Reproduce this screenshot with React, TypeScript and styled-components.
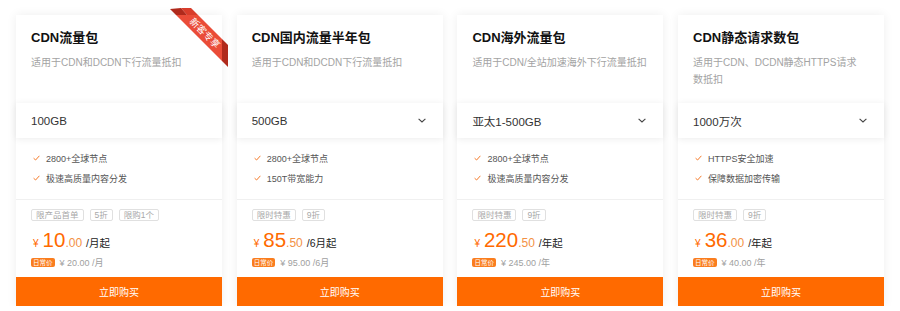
import React from "react";
import styled, { createGlobalStyle } from "styled-components";

const Global = createGlobalStyle`
  html, body { margin: 0; padding: 0; background: #ffffff; }
  body { font-family: "Liberation Sans", "Noto Sans CJK SC", sans-serif; }
`;

const Page = styled.div`
  display: flex;
  gap: 14.7px;
  padding: 15px 0 0 16px;
`;

const Card = styled.div`
  position: relative;
  width: 206px;
  display: flex;
  flex-direction: column;
  background: #fff;
  box-shadow: 0 0 10px rgba(0, 0, 0, 0.07);
`;

const Header = styled.div`
  height: 88px;
  box-sizing: border-box;
  padding: 13px 15px 0;
`;

const Title = styled.div`
  font-size: 13px;
  font-weight: bold;
  line-height: 19px;
  color: #111;
`;

const Desc = styled.div`
  margin-top: 7px;
  font-size: 10px;
  line-height: 17px;
  color: #a3a3a3;
  white-space: pre-line;
`;

const Select = styled.div`
  height: 35px;
  box-sizing: border-box;
  padding: 0 17px 0 15px;
  display: flex;
  align-items: center;
  justify-content: space-between;
  font-size: 11.5px;
  color: #333;
  background: #fff;
  box-shadow: 0 1px 7px rgba(0, 0, 0, 0.08);
`;

const Features = styled.ul`
  list-style: none;
  margin: 0;
  padding: 10px 15px 11px 17px;
  border-bottom: 1px solid #f0f0f0;
`;

const Feature = styled.li`
  display: flex;
  align-items: center;
  gap: 6px;
  height: 20px;
  font-size: 9px;
  color: #555;
`;

const Bottom = styled.div`
  padding: 9px 15px 0;
  display: flex;
  flex-direction: column;
`;

const Tags = styled.div`
  display: flex;
  gap: 6px;
`;

const Tag = styled.span`
  height: 12px;
  box-sizing: border-box;
  padding: 0 4px;
  border: 1px solid #e0e0e0;
  border-radius: 2px;
  font-size: 8.5px;
  line-height: 10px;
  color: #a8a8a8;
`;

const PriceLine = styled.div`
  margin-top: 7px;
  height: 24px;
  display: flex;
  align-items: baseline;
  color: #ff6a00;
  line-height: 24px;
`;

const Yen = styled.span`
  font-size: 10px;
  margin: 0 4px 0 2px;
`;

const Big = styled.span`
  font-size: 20.5px;
`;

const Decimal = styled.span`
  font-size: 12px;
  color: #f39145;
`;

const Unit = styled.span`
  font-size: 10.5px;
  color: #222;
  margin-left: 4px;
`;

const Daily = styled.div`
  margin-top: 5px;
  height: 10px;
  display: flex;
  align-items: center;
  gap: 5px;
  font-size: 9px;
  color: #a0a0a0;
`;

const Badge = styled.span`
  height: 9px;
  padding: 0 2px;
  border-radius: 2px;
  background: #fa7d1e;
  color: #fff;
  font-size: 6.5px;
  line-height: 9px;
`;

const BuyButton = styled.button`
  margin-top: 10px;
  height: 29px;
  border: none;
  background: #ff6a00;
  color: #fff;
  font-family: inherit;
  font-size: 10px;
  cursor: pointer;
`;

const Ribbon = styled.svg`
  position: absolute;
  top: -8px;
  right: -8px;
  width: 60px;
  height: 62px;
`;

const Check = () => (
  <svg width="7" height="6" viewBox="0 0 7 6">
    <path d="M0.6 3.2 L2.6 5 L6.4 0.8" fill="none" stroke="#f57a2a" strokeWidth="1" />
  </svg>
);

const Chevron = () => (
  <svg width="8" height="5" viewBox="0 0 8 5">
    <path d="M0.6 0.8 L4 4 L7.4 0.8" fill="none" stroke="#444" strokeWidth="1.1" />
  </svg>
);

type Plan = {
  title: string;
  desc: string;
  spec: string;
  dropdown: boolean;
  features: string[];
  tags: string[];
  big: string;
  dec: string;
  unit: string;
  daily: string;
  ribbon?: boolean;
};

const plans: Plan[] = [
  {
    title: "CDN流量包",
    desc: "适用于CDN和DCDN下行流量抵扣",
    spec: "100GB",
    dropdown: false,
    features: ["2800+全球节点", "极速高质量内容分发"],
    tags: ["限产品首单", "5折", "限购1个"],
    big: "10",
    dec: ".00",
    unit: "/月起",
    daily: "¥ 20.00 /月",
    ribbon: true,
  },
  {
    title: "CDN国内流量半年包",
    desc: "适用于CDN和DCDN下行流量抵扣",
    spec: "500GB",
    dropdown: true,
    features: ["2800+全球节点", "150T带宽能力"],
    tags: ["限时特惠", "9折"],
    big: "85",
    dec: ".50",
    unit: "/6月起",
    daily: "¥ 95.00 /6月",
  },
  {
    title: "CDN海外流量包",
    desc: "适用于CDN/全站加速海外下行流量抵扣",
    spec: "亚太1-500GB",
    dropdown: true,
    features: ["2800+全球节点", "极速高质量内容分发"],
    tags: ["限时特惠", "9折"],
    big: "220",
    dec: ".50",
    unit: "/年起",
    daily: "¥ 245.00 /年",
  },
  {
    title: "CDN静态请求数包",
    desc: "适用于CDN、DCDN静态HTTPS请求\n数抵扣",
    spec: "1000万次",
    dropdown: true,
    features: ["HTTPS安全加速", "保障数据加密传输"],
    tags: ["限时特惠", "9折"],
    big: "36",
    dec: ".00",
    unit: "/年起",
    daily: "¥ 40.00 /年",
  },
];

const NewRibbon = () => (
  <Ribbon viewBox="0 0 60 62">
    <polygon points="6,8 28,8 52,32 52,54" fill="#ea4c38" />
    <polygon points="11,1 21,1 28,8 17,8" fill="#d83d2b" />
    <polygon points="0,2 0,2 11,1 17,8 6,8" fill="#b02a1c" />
    <polygon points="52,32 58,38 58,60 52,54" fill="#b02a1c" />
    <text
      x="0"
      y="0"
      transform="translate(35 26) rotate(45)"
      textAnchor="middle"
      dominantBaseline="central"
      fontSize="9.5"
      fill="#fff"
      fontFamily="'Liberation Sans', 'Noto Sans CJK SC', sans-serif"
    >
      新客专享
    </text>
  </Ribbon>
);

export default function App() {
  return (
    <>
      <Global />
      <Page>
        {plans.map((p) => (
          <Card key={p.title}>
            {p.ribbon && <NewRibbon />}
            <Header>
              <Title>{p.title}</Title>
              <Desc>{p.desc}</Desc>
            </Header>
            <Select>
              <span>{p.spec}</span>
              {p.dropdown && <Chevron />}
            </Select>
            <Features>
              {p.features.map((f) => (
                <Feature key={f}>
                  <Check />
                  <span>{f}</span>
                </Feature>
              ))}
            </Features>
            <Bottom>
              <Tags>
                {p.tags.map((t) => (
                  <Tag key={t}>{t}</Tag>
                ))}
              </Tags>
              <PriceLine>
                <Yen>¥</Yen>
                <Big>{p.big}</Big>
                <Decimal>{p.dec}</Decimal>
                <Unit>{p.unit}</Unit>
              </PriceLine>
              <Daily>
                <Badge>日常价</Badge>
                <span>{p.daily}</span>
              </Daily>
            </Bottom>
            <BuyButton>立即购买</BuyButton>
          </Card>
        ))}
      </Page>
    </>
  );
}
